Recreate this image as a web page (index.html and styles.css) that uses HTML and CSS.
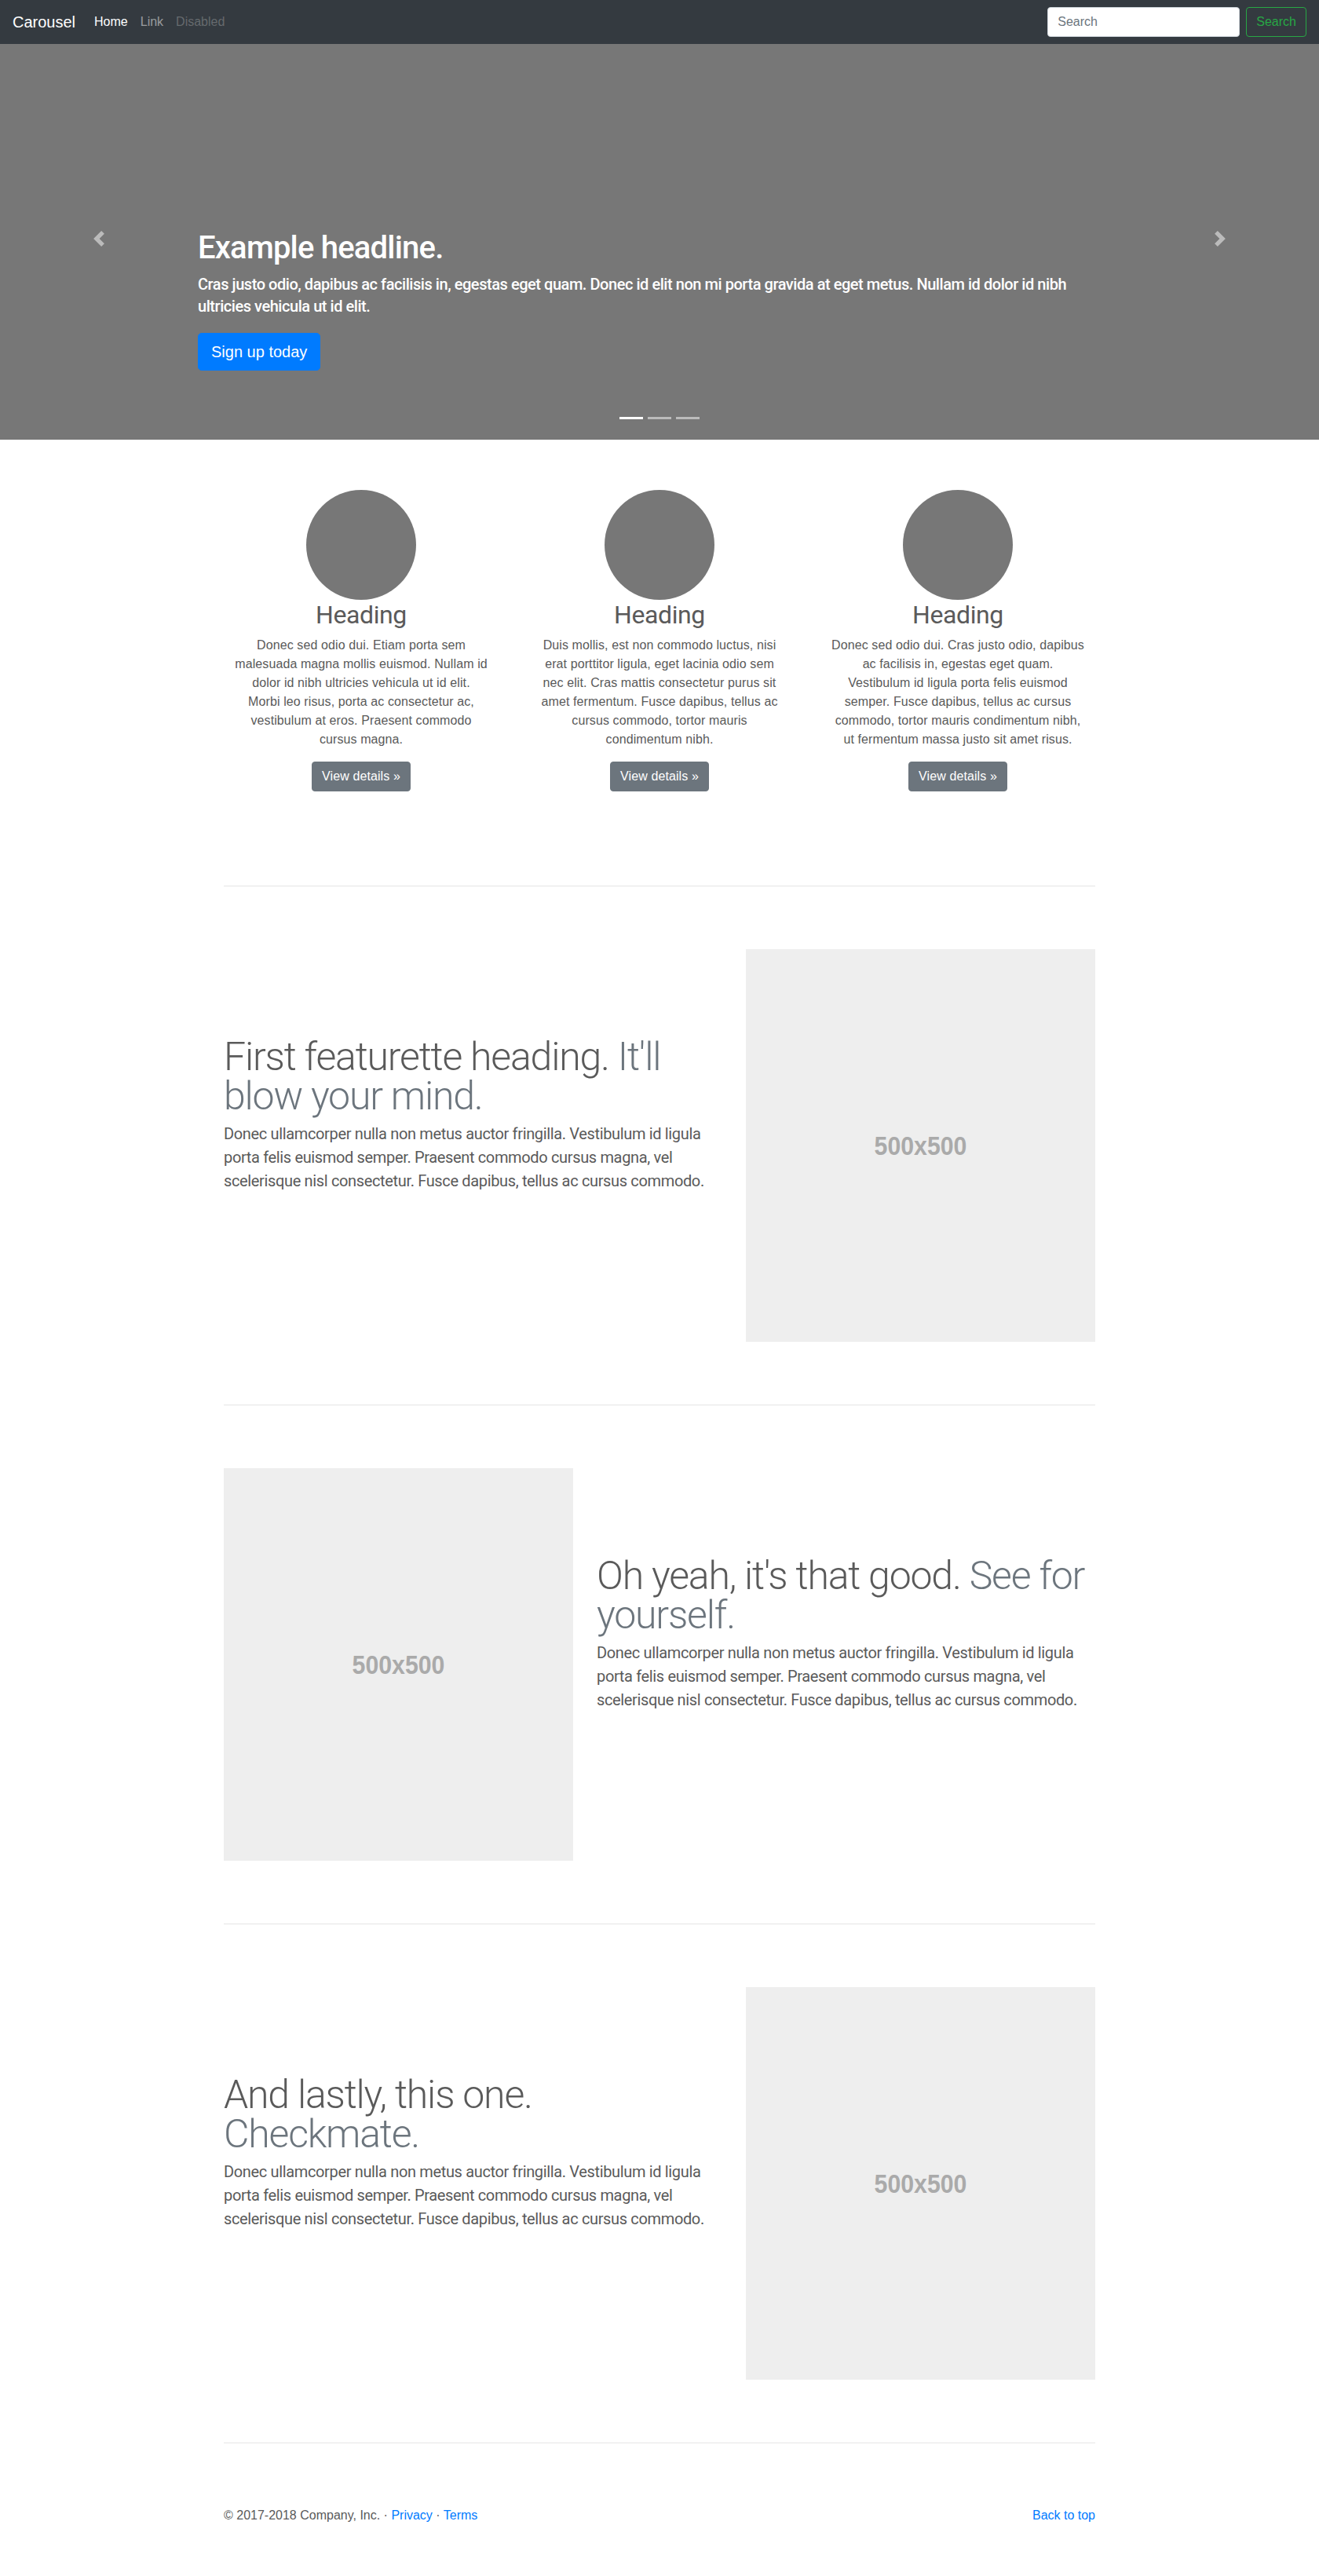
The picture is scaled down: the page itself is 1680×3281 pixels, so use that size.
FILE: index.html
```html
<!DOCTYPE html>
<html lang="en">
<head>
<meta charset="utf-8">
<title>Carousel Template</title>
<link rel="stylesheet" href="styles.css">
</head>
<body>
<header>
  <nav class="navbar">
    <a class="brand" href="#">Carousel</a>
    <ul class="nav">
      <li><a class="nav-link active" href="#">Home</a></li>
      <li><a class="nav-link" href="#">Link</a></li>
      <li><a class="nav-link disabled" href="#">Disabled</a></li>
    </ul>
    <form class="search">
      <input class="search-input" type="text" placeholder="Search" aria-label="Search">
      <button class="btn btn-outline-success" type="button">Search</button>
    </form>
  </nav>
</header>

<main>
  <div class="carousel">
    <div class="slide">
      <div class="caption">
        <h1 class="caption-title">Example headline.</h1>
        <p class="caption-text">Cras justo odio, dapibus ac facilisis in, egestas eget quam. Donec id elit non mi porta gravida at eget metus. Nullam id dolor id nibh ultricies vehicula ut id elit.</p>
        <p class="caption-action"><a class="btn btn-lg btn-primary" href="#">Sign up today</a></p>
      </div>
    </div>
    <ol class="indicators">
      <li class="active"></li>
      <li></li>
      <li></li>
    </ol>
    <a class="control control-prev" href="#" aria-label="Previous">
      <svg class="control-icon" viewBox="0 0 8 8" width="20" height="20"><path d="M5.25 0l-4 4 4 4 1.5-1.5-2.5-2.5 2.5-2.5-1.5-1.5z" fill="#fff"/></svg>
    </a>
    <a class="control control-next" href="#" aria-label="Next">
      <svg class="control-icon" viewBox="0 0 8 8" width="20" height="20"><path d="M2.75 0l-1.5 1.5 2.5 2.5-2.5 2.5 1.5 1.5 4-4-4-4z" fill="#fff"/></svg>
    </a>
  </div>

  <div class="container marketing">
    <div class="marketing-row">
      <div class="feature">
        <div class="avatar"></div>
        <h2 class="feature-title">Heading</h2>
        <p>Donec sed odio dui. Etiam porta sem<br>malesuada magna mollis euismod. Nullam id<br>dolor id nibh ultricies vehicula ut id elit.<br>Morbi leo risus, porta ac consectetur ac,<br>vestibulum at eros. Praesent commodo<br>cursus magna.</p>
        <p><a class="btn btn-secondary" href="#">View details &raquo;</a></p>
      </div>
      <div class="feature">
        <div class="avatar"></div>
        <h2 class="feature-title">Heading</h2>
        <p>Duis mollis, est non commodo luctus, nisi<br>erat porttitor ligula, eget lacinia odio sem<br>nec elit. Cras mattis consectetur purus sit<br>amet fermentum. Fusce dapibus, tellus ac<br>cursus commodo, tortor mauris<br>condimentum nibh.</p>
        <p><a class="btn btn-secondary" href="#">View details &raquo;</a></p>
      </div>
      <div class="feature">
        <div class="avatar"></div>
        <h2 class="feature-title">Heading</h2>
        <p>Donec sed odio dui. Cras justo odio, dapibus<br>ac facilisis in, egestas eget quam.<br>Vestibulum id ligula porta felis euismod<br>semper. Fusce dapibus, tellus ac cursus<br>commodo, tortor mauris condimentum nibh,<br>ut fermentum massa justo sit amet risus.</p>
        <p><a class="btn btn-secondary" href="#">View details &raquo;</a></p>
      </div>
    </div>

    <hr class="divider">

    <div class="featurette">
      <div class="featurette-text">
        <h2 class="featurette-heading">First featurette heading. <span class="muted">It'll blow your mind.</span></h2>
        <p class="lead">Donec ullamcorper nulla non metus auctor fringilla. Vestibulum id ligula porta felis euismod semper. Praesent commodo cursus magna, vel scelerisque nisl consectetur. Fusce dapibus, tellus ac cursus commodo.</p>
      </div>
      <div class="featurette-media">
        <svg class="placeholder" viewBox="0 0 500 500" preserveAspectRatio="none" role="img" aria-label="500x500"><rect width="500" height="500" fill="#eee"/><text x="250" y="250" text-anchor="middle" dominant-baseline="central" class="placeholder-text">500x500</text></svg>
      </div>
    </div>

    <hr class="divider">

    <div class="featurette featurette-reverse">
      <div class="featurette-media">
        <svg class="placeholder" viewBox="0 0 500 500" preserveAspectRatio="none" role="img" aria-label="500x500"><rect width="500" height="500" fill="#eee"/><text x="250" y="250" text-anchor="middle" dominant-baseline="central" class="placeholder-text">500x500</text></svg>
      </div>
      <div class="featurette-text">
        <h2 class="featurette-heading">Oh yeah, it's that good. <span class="muted">See for yourself.</span></h2>
        <p class="lead">Donec ullamcorper nulla non metus auctor fringilla. Vestibulum id ligula porta felis euismod semper. Praesent commodo cursus magna, vel scelerisque nisl consectetur. Fusce dapibus, tellus ac cursus commodo.</p>
      </div>
    </div>

    <hr class="divider">

    <div class="featurette">
      <div class="featurette-text">
        <h2 class="featurette-heading">And lastly, this one. <span class="muted">Checkmate.</span></h2>
        <p class="lead">Donec ullamcorper nulla non metus auctor fringilla. Vestibulum id ligula porta felis euismod semper. Praesent commodo cursus magna, vel scelerisque nisl consectetur. Fusce dapibus, tellus ac cursus commodo.</p>
      </div>
      <div class="featurette-media">
        <svg class="placeholder" viewBox="0 0 500 500" preserveAspectRatio="none" role="img" aria-label="500x500"><rect width="500" height="500" fill="#eee"/><text x="250" y="250" text-anchor="middle" dominant-baseline="central" class="placeholder-text">500x500</text></svg>
      </div>
    </div>

    <hr class="divider">
  </div>

  <footer class="container footer">
    <p>&copy; 2017-2018 Company, Inc. &middot; <a href="#">Privacy</a> &middot; <a href="#">Terms</a></p>
    <p><a href="#">Back to top</a></p>
  </footer>
</main>
</body>
</html>
```

FILE: styles.css
```css
* {
  box-sizing: border-box;
}

html,
body {
  margin: 0;
}

body {
  padding: 48px 0;
  font-family: "Liberation Sans", Arial, sans-serif;
  font-size: 16px;
  line-height: 1.5;
  color: #5a5a5a;
  background: #fff;
}

a {
  color: #007bff;
  text-decoration: none;
}

/* Navbar */
.navbar {
  position: fixed;
  top: 0;
  left: 0;
  right: 0;
  z-index: 30;
  display: flex;
  align-items: center;
  height: 56px;
  padding: 8px 16px;
  background: #343a40;
}

.brand {
  margin-right: 16px;
  font-size: 20px;
  line-height: 30px;
  color: #fff;
}

.nav {
  display: flex;
  flex: 1;
  margin: 0;
  padding: 0;
  list-style: none;
}

.nav-link {
  display: block;
  padding: 8px;
  line-height: 24px;
  color: rgba(255, 255, 255, 0.5);
}

.nav-link.active {
  color: #fff;
}

.nav-link.disabled {
  color: rgba(255, 255, 255, 0.25);
}

.search {
  display: flex;
  align-items: center;
  margin: 0;
}

.search-input {
  width: 245px;
  height: 38px;
  margin-right: 8px;
  padding: 6px 12px;
  font-family: inherit;
  font-size: 16px;
  line-height: 24px;
  color: #495057;
  background: #fff;
  border: 1px solid #ced4da;
  border-radius: 4px;
}

.search-input::placeholder {
  color: #6c757d;
  opacity: 1;
}

/* Buttons */
.btn {
  display: inline-block;
  padding: 6px 12px;
  font-family: "Liberation Sans", Arial, sans-serif;
  font-size: 16px;
  line-height: 24px;
  text-align: center;
  white-space: nowrap;
  border: 1px solid transparent;
  border-radius: 4px;
  background: transparent;
}

.btn-outline-success {
  color: #28a745;
  border-color: #28a745;
}

.btn-primary {
  color: #fff;
  background: #007bff;
  border-color: #007bff;
}

.btn-secondary {
  color: #fff;
  background: #6c757d;
  border-color: #6c757d;
}

.btn-lg {
  padding: 8px 16px;
  font-size: 20px;
  line-height: 30px;
  border-radius: 4.8px;
}

/* Carousel */
.carousel {
  position: relative;
  margin-bottom: 64px;
}

.slide {
  display: flex;
  flex-direction: column;
  justify-content: flex-end;
  height: 512px;
  padding: 0 15% 48px;
  background: #777;
}

.caption {
  padding: 20px 0;
  color: #fff;
}

.caption-title {
  margin: 0 0 8px;
  font-family: Roboto, "Liberation Sans", sans-serif;
  font-size: 40px;
  font-weight: 500;
  line-height: 1.2;
  letter-spacing: -0.8px;
}

.caption-text {
  margin: 0 0 20px;
  font-family: Roboto, "Liberation Sans", sans-serif;
  font-size: 20px;
  font-weight: 500;
  line-height: 1.4;
  letter-spacing: -0.45px;
}

.caption-action {
  margin: 0 0 20px;
  font-size: 20px;
  line-height: 1.4;
}

.indicators {
  position: absolute;
  left: 0;
  right: 0;
  bottom: 10px;
  z-index: 15;
  display: flex;
  justify-content: center;
  margin: 0 15% 16px;
  padding: 0;
  list-style: none;
}

.indicators li {
  width: 30px;
  height: 3px;
  margin: 0 3px;
  background: rgba(255, 255, 255, 0.5);
}

.indicators li.active {
  background: #fff;
}

.control {
  position: absolute;
  top: 0;
  bottom: 0;
  display: flex;
  align-items: center;
  justify-content: center;
  width: 15%;
  opacity: 0.5;
}

.control-prev {
  left: 0;
}

.control-next {
  right: 0;
}

.control-icon {
  display: block;
  width: 20px;
  height: 20px;
}

/* Container */
.container {
  width: 1140px;
  margin: 0 auto;
  padding: 0 15px;
}

/* Marketing */
.marketing-row {
  display: grid;
  grid-template-columns: repeat(3, 1fr);
  margin: 0 -15px;
}

.feature {
  margin-bottom: 24px;
  padding: 0 15px;
  text-align: center;
}

.avatar {
  width: 140px;
  height: 140px;
  margin: 0 auto;
  border-radius: 50%;
  background: #777;
}

.feature-title {
  margin: 0 0 8px;
  font-family: Roboto, "Liberation Sans", sans-serif;
  font-size: 32px;
  font-weight: 400;
  line-height: 1.2;
  letter-spacing: -0.4px;
}

.feature p {
  margin: 0 12px 16px;
  letter-spacing: 0.1px;
}

/* Featurettes */
.divider {
  height: 0;
  margin: 80px 0;
  border: 0;
  border-top: 1px solid rgba(0, 0, 0, 0.1);
}

.featurette {
  display: grid;
  grid-template-columns: 665px 475px;
  margin: 0 -15px;
}

.featurette-reverse {
  grid-template-columns: 475px 665px;
}

.featurette-text,
.featurette-media {
  padding: 0 15px;
}

.featurette-heading {
  margin: 112px 0 8px;
  font-family: Roboto, "Liberation Sans", sans-serif;
  font-size: 50px;
  font-weight: 300;
  line-height: 1;
  letter-spacing: -1.2px;
}

.muted {
  color: #6c757d;
}

.lead {
  margin: 0 0 16px;
  font-family: Roboto, "Liberation Sans", sans-serif;
  font-size: 20px;
  font-weight: 400;
  line-height: 1.5;
  letter-spacing: -0.35px;
}

.placeholder {
  display: block;
  width: 100%;
  height: 500px;
}

.placeholder-text {
  font-family: "Liberation Sans", Arial, sans-serif;
  font-size: 34px;
  font-weight: 700;
  fill: #aaa;
}

/* Footer */
.footer {
  display: flex;
  justify-content: space-between;
}

.footer p {
  margin: 0 0 16px;
}
```
